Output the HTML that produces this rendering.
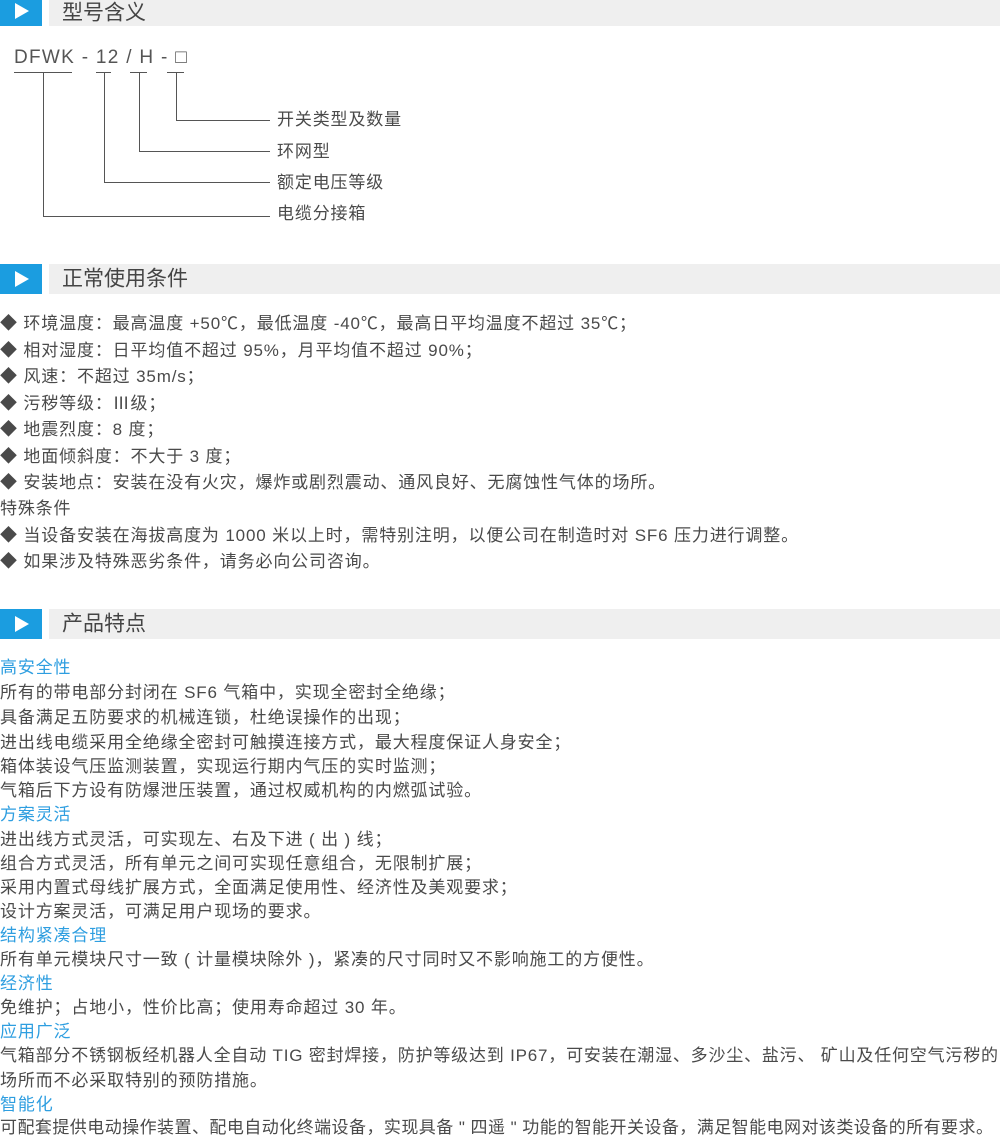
<!DOCTYPE html>
<html><head><meta charset="utf-8"><style>
*{margin:0;padding:0;box-sizing:border-box}
body{width:1000px;height:1137px;overflow:hidden;background:#fff;font-family:"Liberation Sans","Noto Sans CJK SC",sans-serif;color:#4a4a4a;position:relative}
.hd{position:absolute;left:0;width:1000px;height:30px}
.hd .b{position:absolute;left:0;top:0;width:42px;height:100%;background:#1b9de0}
.hd .b:after{content:"";position:absolute;left:15px;top:50%;margin-top:-8px;border-left:14px solid #fff;border-top:8px solid transparent;border-bottom:8px solid transparent}
.hd .g{position:absolute;left:49px;right:0;top:0;height:100%;background:#efefef}
.hd .t{position:absolute;left:62px;top:50%;transform:translateY(-50%);font-size:21px;color:#444;line-height:1}
.l{position:absolute;left:0;font-size:17px;letter-spacing:0.85px;white-space:nowrap;line-height:20px}
.blue{color:#2e9ee0}
.ln{position:absolute;background:#555}
</style></head><body>
<div class="hd" style="top:-4px"><div class="b"></div><div class="g"></div><div class="t" style="margin-top:2px">型号含义</div></div>

<div class="l" style="left:14px;top:48px;font-size:19px;color:#555;letter-spacing:1.3px">DFWK - 12 / H - □</div>
<div class="ln" style="left:14px;top:72px;width:58px;height:1px"></div>
<div class="ln" style="left:96px;top:72px;width:15px;height:1px"></div>
<div class="ln" style="left:130px;top:72px;width:17px;height:1px"></div>
<div class="ln" style="left:167px;top:72px;width:17px;height:1px"></div>
<div class="ln" style="left:43px;top:72px;width:1px;height:145px"></div>
<div class="ln" style="left:43px;top:216px;width:227px;height:1px"></div>
<div class="ln" style="left:104px;top:72px;width:1px;height:111px"></div>
<div class="ln" style="left:104px;top:182px;width:166px;height:1px"></div>
<div class="ln" style="left:139px;top:72px;width:1px;height:80px"></div>
<div class="ln" style="left:139px;top:151px;width:131px;height:1px"></div>
<div class="ln" style="left:176px;top:72px;width:1px;height:49px"></div>
<div class="ln" style="left:176px;top:120px;width:94px;height:1px"></div>
<div class="l" style="left:277px;top:110px">开关类型及数量</div>
<div class="l" style="left:277px;top:142px">环网型</div>
<div class="l" style="left:277px;top:173px">额定电压等级</div>
<div class="l" style="left:277px;top:204px">电缆分接箱</div>

<div class="hd" style="top:264px"><div class="b"></div><div class="g"></div><div class="t">正常使用条件</div></div>
<div class="l" style="top:314px">◆ 环境温度：最高温度 +50℃，最低温度 -40℃，最高日平均温度不超过 35℃；</div>
<div class="l" style="top:341px">◆ 相对湿度：日平均值不超过 95%，月平均值不超过 90%；</div>
<div class="l" style="top:367px">◆ 风速：不超过 35m/s；</div>
<div class="l" style="top:394px">◆ 污秽等级：Ⅲ级；</div>
<div class="l" style="top:420px">◆ 地震烈度：8 度；</div>
<div class="l" style="top:447px">◆ 地面倾斜度：不大于 3 度；</div>
<div class="l" style="top:473px">◆ 安装地点：安装在没有火灾，爆炸或剧烈震动、通风良好、无腐蚀性气体的场所。</div>
<div class="l" style="top:499px">特殊条件</div>
<div class="l" style="top:526px">◆ 当设备安装在海拔高度为 1000 米以上时，需特别注明，以便公司在制造时对 SF6 压力进行调整。</div>
<div class="l" style="top:552px">◆ 如果涉及特殊恶劣条件，请务必向公司咨询。</div>

<div class="hd" style="top:609px"><div class="b"></div><div class="g"></div><div class="t">产品特点</div></div>
<div class="l blue" style="top:658px">高安全性</div>
<div class="l" style="top:683px">所有的带电部分封闭在 SF6 气箱中，实现全密封全绝缘；</div>
<div class="l" style="top:708px">具备满足五防要求的机械连锁，杜绝误操作的出现；</div>
<div class="l" style="top:733px">进出线电缆采用全绝缘全密封可触摸连接方式，最大程度保证人身安全；</div>
<div class="l" style="top:757px">箱体装设气压监测装置，实现运行期内气压的实时监测；</div>
<div class="l" style="top:781px">气箱后下方设有防爆泄压装置，通过权威机构的内燃弧试验。</div>
<div class="l blue" style="top:805px">方案灵活</div>
<div class="l" style="top:830px">进出线方式灵活，可实现左、右及下进 ( 出 ) 线；</div>
<div class="l" style="top:854px">组合方式灵活，所有单元之间可实现任意组合，无限制扩展；</div>
<div class="l" style="top:878px">采用内置式母线扩展方式，全面满足使用性、经济性及美观要求；</div>
<div class="l" style="top:902px">设计方案灵活，可满足用户现场的要求。</div>
<div class="l blue" style="top:926px">结构紧凑合理</div>
<div class="l" style="top:950px">所有单元模块尺寸一致 ( 计量模块除外 )，紧凑的尺寸同时又不影响施工的方便性。</div>
<div class="l blue" style="top:974px">经济性</div>
<div class="l" style="top:998px">免维护；占地小，性价比高；使用寿命超过 30 年。</div>
<div class="l blue" style="top:1022px">应用广泛</div>
<div class="l" style="top:1046px;letter-spacing:0.8px">气箱部分不锈钢板经机器人全自动 TIG 密封焊接，防护等级达到 IP67，可安装在潮湿、多沙尘、盐污、 矿山及任何空气污秽的</div>
<div class="l" style="top:1071px">场所而不必采取特别的预防措施。</div>
<div class="l blue" style="top:1095px">智能化</div>
<div class="l" style="top:1118px;letter-spacing:0.45px">可配套提供电动操作装置、配电自动化终端设备，实现具备 " 四遥 " 功能的智能开关设备，满足智能电网对该类设备的所有要求。</div>
</body></html>
